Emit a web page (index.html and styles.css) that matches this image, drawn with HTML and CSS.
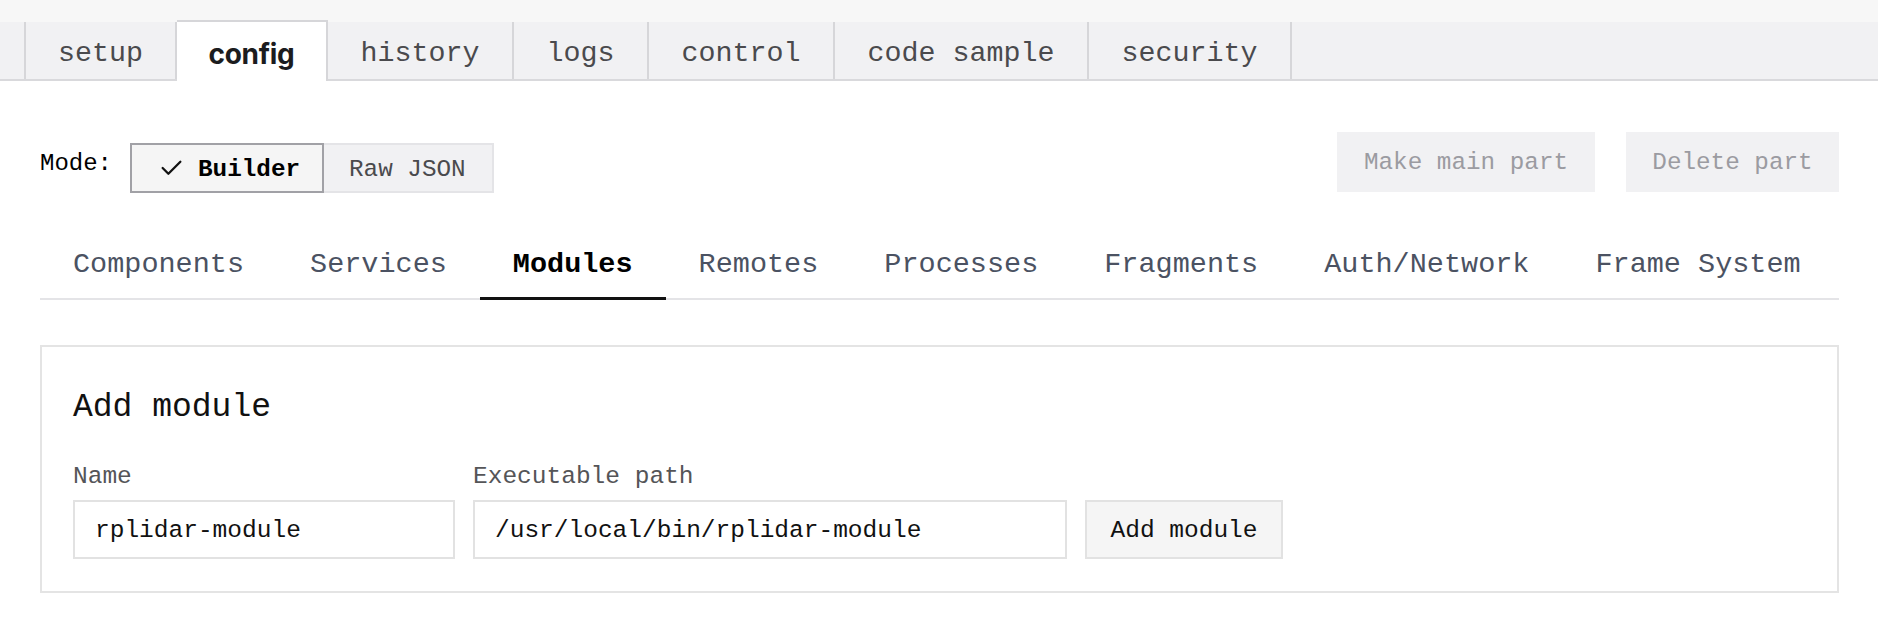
FILE: index.html
```html
<!DOCTYPE html>
<html lang="en">
<head>
<meta charset="utf-8">
<title>Config</title>
<link rel="stylesheet" href="styles.css">
</head>
<body>
<div class="topband"></div>
<nav class="tabbar">
  <a class="tab">setup</a>
  <a class="tab active">config</a>
  <a class="tab">history</a>
  <a class="tab">logs</a>
  <a class="tab">control</a>
  <a class="tab">code sample</a>
  <a class="tab">security</a>
</nav>
<main class="content">
  <div class="mode-row">
    <div class="mode-left">
      <span class="mode-label">Mode:</span>
      <div class="segmented">
        <button class="seg seg-on"><svg class="check" viewBox="0 0 24 24" width="25" height="25"><path d="M3.5 12.5 L9 18 L20.5 6.5" fill="none" stroke="#111" stroke-width="2.2" stroke-linecap="round" stroke-linejoin="round"/></svg><span>Builder</span></button>
        <button class="seg seg-off">Raw JSON</button>
      </div>
    </div>
    <div class="mode-right">
      <button class="ghost">Make main part</button>
      <button class="ghost">Delete part</button>
    </div>
  </div>
  <nav class="subtabs">
    <a class="subtab">Components</a>
    <a class="subtab">Services</a>
    <a class="subtab on">Modules</a>
    <a class="subtab">Remotes</a>
    <a class="subtab">Processes</a>
    <a class="subtab">Fragments</a>
    <a class="subtab">Auth/Network</a>
    <a class="subtab">Frame System</a>
  </nav>
  <section class="card">
    <h2 class="card-title">Add module</h2>
    <div class="form-row">
      <label class="field">
        <span class="field-label">Name</span>
        <span class="input input-name">rplidar-module</span>
      </label>
      <label class="field">
        <span class="field-label">Executable path</span>
        <span class="input input-path">/usr/local/bin/rplidar-module</span>
      </label>
      <button class="add-btn">Add module</button>
    </div>
  </section>
</main>
</body>
</html>
```

FILE: styles.css
```css
* { box-sizing: border-box; }
body {
  margin: 0;
  background: #fff;
  font-family: "Liberation Mono", "DejaVu Sans Mono", monospace;
  color: #111;
}
.topband { height: 22px; background: #f7f7f7; }
.tabbar {
  display: flex;
  height: 59px;
  background: #f1f1f3;
  border-bottom: 2px solid #d9d9dc;
  padding-left: 24px;
}
.tab {
  display: flex;
  align-items: center;
  justify-content: center;
  height: 57px;
  padding: 5px 0 0;
  font-size: 28.3px;
  white-space: nowrap;
  color: #4a4a4d;
  border-right: 2px solid #d6d6d9;
}
.tab:first-child { border-left: 2px solid #d6d6d9; }
.tab:nth-child(1) { width: 153px; }
.tab:nth-child(2) { width: 151px; }
.tab:nth-child(3) { width: 186px; }
.tab:nth-child(4) { width: 135px; }
.tab:nth-child(5) { width: 186px; }
.tab:nth-child(6) { width: 254px; }
.tab:nth-child(7) { width: 203px; }
.tab.active {
  background: #fff;
  height: 61px;
  margin-top: -2px;
  margin-bottom: -2px;
  padding-top: 4px;
  border: 2px solid #d6d6d9;
  border-bottom: none;
  border-left: none;
  font-family: Inter, "Liberation Sans", sans-serif;
  font-weight: 700;
  color: #1c1c1e;
  font-size: 28px;
  letter-spacing: -0.3px;
}
.content { padding: 0 39px 0 40px; }
.mode-row {
  display: flex;
  justify-content: space-between;
  align-items: flex-start;
  height: 112px;
  padding-top: 51px;
}
.mode-left { display: flex; align-items: flex-start; gap: 18px; margin-top: 11px; }
.mode-label { font-size: 24px; line-height: 42px; color: #000; }
.segmented { display: flex; }
.seg {
  height: 50px;
  padding-top: 3px;
  font-family: "Liberation Mono", "DejaVu Sans Mono", monospace;
  font-size: 24.3px;
  display: flex;
  align-items: center;
  cursor: pointer;
}
.seg-on {
  width: 194px;
  padding-left: 27px;
  gap: 14px;
  background: #f5f5f5;
  border: 2px solid #a1a1a6;
  color: #000;
  font-weight: 700;
}
.seg-on .check { margin-top: -3px; }
.seg-off {
  width: 170px;
  padding-left: 25px;
  background: #f1f1f3;
  border: 2px solid #e4e4e7;
  border-left: none;
  color: #4a4a4d;
}
.check { display: block; flex: none; }
.mode-right { display: flex; gap: 31px; }
.ghost {
  height: 60px;
  padding: 0 26px;
  background: #f1f1f3;
  border: none;
  color: #9b9ba1;
  font-family: "Liberation Mono", "DejaVu Sans Mono", monospace;
  font-size: 24.3px;
}
.ghost:first-child { width: 258px; }
.ghost:last-child { width: 213px; }
.subtabs {
  display: flex;
  margin-top: 33px;
  border-bottom: 2px solid #e4e4e7;
}
.subtab {
  padding: 19px 33px 13px;
  line-height: 40px;
  font-size: 28.5px;
  white-space: nowrap;
  color: #4b5262;
  margin-bottom: -2px;
  border-bottom: 2px solid transparent;
}
.subtab.on {
  color: #000;
  font-weight: 700;
  border-bottom: 3px solid #111;
  padding-bottom: 12px;
}
.card {
  margin-top: 45px;
  border: 2px solid #e4e4e4;
  padding: 36px 31px 32px;
}
.card-title {
  margin: 0;
  font-weight: 400;
  font-size: 33px;
  line-height: 50px;
  color: #111;
}
.form-row {
  display: flex;
  align-items: flex-end;
  gap: 18px;
  margin-top: 27px;
}
.field { display: flex; flex-direction: column; gap: 6px; }
.field-label { font-size: 24.5px; line-height: 34px; color: #555558; }
.input {
  height: 59px;
  display: flex;
  align-items: center;
  padding: 2px 20px 0;
  border: 2px solid #e2e2e2;
  font-size: 24.5px;
  color: #111;
}
.input-name { width: 382px; }
.input-path { width: 594px; }
.add-btn {
  height: 59px;
  width: 198px;
  padding: 2px 23px 0;
  background: #f5f5f5;
  border: 2px solid #e2e2e2;
  font-family: "Liberation Mono", "DejaVu Sans Mono", monospace;
  font-size: 24.5px;
  color: #111;
}
```
